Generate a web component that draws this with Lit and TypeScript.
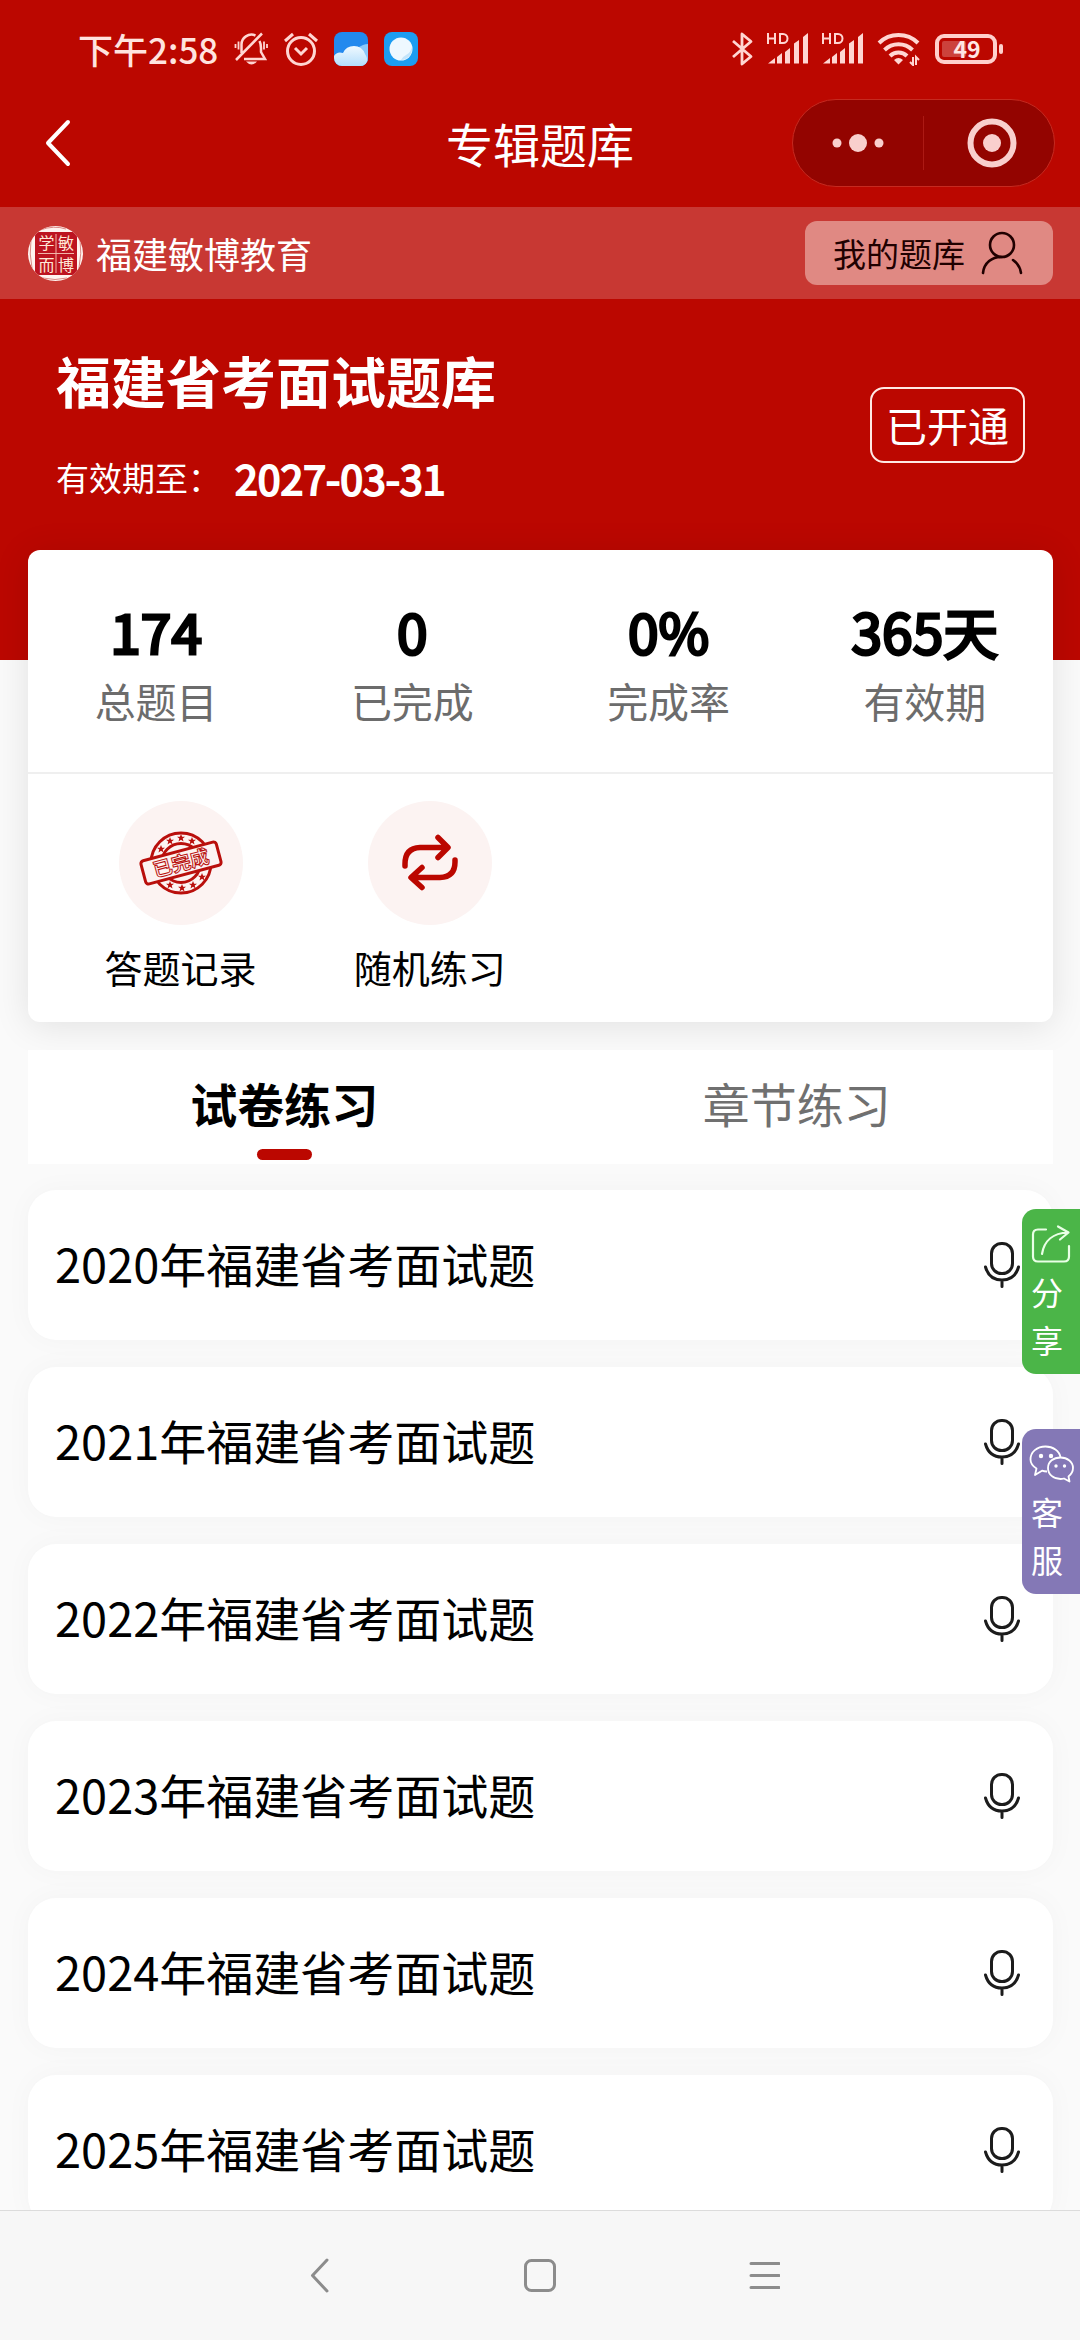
import { LitElement, html, svg, css } from "lit";
import { customElement, state } from "lit/decorators.js";
import { classMap } from "lit/directives/class-map.js";

const stats = [
  { value: "174", label: "总题目" },
  { value: "0", label: "已完成" },
  { value: "0%", label: "完成率" },
  { value: "365天", label: "有效期" },
];

const years = [2020, 2021, 2022, 2023, 2024, 2025];

const signal = () => html`<svg class="icon" width="42" height="34" viewBox="0 0 42 34" aria-hidden="true">
  <g fill="#ffd6d2">
    <path d="M1 31.5 8 26V31.5H1zM10 25l5-4v10.5h-5zM18 20l5-4v15.5h-5zM27 11.5l5-3.5v23.5h-5zM36 5l5-4v30.5h-5z" />
  </g>
  <path d="M1 1v11M1 6.5h7M8 1v11M13 2v9h3a4.5 4.5 0 0 0 0-9h-3z" fill="none" stroke="#ffd6d2" stroke-width="2" />
</svg>`;

const starAt = (x: number, y: number) => svg`<path transform="translate(${x} ${y})"
  d="M0-4 1.1-1.3 4-1.2 1.7.6 2.5 3.4 0 1.8-2.5 3.4-1.7.6-4-1.2-1.1-1.3z" fill="#b90f0c" />`;

@customElement("app-root")
export class AppRoot extends LitElement {
  @state() private tab = 0;

  static styles = css`
    :host {
      display: block;
      font-family: "Noto Sans CJK SC", "Noto Sans", sans-serif;
      color: #000;
    }
    .page {
      position: relative;
      display: flex;
      flex-direction: column;
      height: 100vh;
      overflow: hidden;
      background: #fafafa;
    }
    button {
      font: inherit;
      color: inherit;
      background: none;
      border: 0;
      padding: 0;
      margin: 0;
      cursor: pointer;
    }
    .icon {
      display: block;
      flex: none;
    }
    .content {
      flex: 1;
      min-height: 0;
      overflow: hidden;
    }
    .top {
      background: #bb0700;
      color: #fff;
      padding-bottom: 110px;
    }
    .status {
      display: flex;
      align-items: center;
      justify-content: space-between;
      height: 98px;
      padding: 0 76px 0 78px;
      color: #ffe3df;
    }
    .status-side {
      display: flex;
      align-items: center;
      gap: 16px;
    }
    .status-side.right {
      gap: 13px;
    }
    .clock {
      font-size: 35px;
      line-height: 48px;
      font-weight: 500;
    }
    .battery {
      font-family: "Noto Sans CJK SC", sans-serif;
      font-size: 23px;
      font-weight: 700;
    }
    .navbar {
      display: grid;
      grid-template-columns: 1fr auto 1fr;
      align-items: center;
      height: 90px;
      margin-bottom: 19px;
      padding: 0 25px;
    }
    .back {
      justify-self: start;
      padding: 0 16px;
    }
    .heading {
      margin: 0;
      font-size: 47px;
      line-height: 60px;
      font-weight: 400;
    }
    .capsule {
      justify-self: end;
      display: flex;
      align-items: center;
      height: 86px;
      border: 1px solid #c62a20;
      border-radius: 44px;
      background: #930400;
    }
    .capsule button {
      display: grid;
      place-items: center;
      width: 130px;
      height: 86px;
    }
    .capsule .close {
      padding-left: 6px;
    }
    .rule {
      width: 1px;
      height: 54px;
      background: #ac1a14;
    }
    .band {
      display: flex;
      align-items: center;
      justify-content: space-between;
      padding: 14px 27px 14px 28px;
      background: rgba(255, 255, 255, 0.2);
    }
    .brand {
      display: flex;
      align-items: center;
      gap: 13px;
      font-size: 36px;
      line-height: 48px;
    }
    .seal-text {
      font-size: 16px;
    }
    .mine {
      display: flex;
      align-items: center;
      gap: 16px;
      height: 64px;
      padding: 0 30px 0 28px;
      border-radius: 12px;
      background: #e08983;
      color: #200000;
      font-size: 33px;
      line-height: 48px;
    }
    .hero {
      display: flex;
      align-items: center;
      justify-content: space-between;
      padding: 50px 55px 43px 56px;
    }
    .hero-title {
      margin: 0 0 38px;
      font-size: 55px;
      line-height: 60px;
      font-weight: 700;
    }
    .expiry {
      display: flex;
      align-items: center;
      gap: 14px;
      font-size: 33px;
      line-height: 60px;
      margin: 0;
    }
    .expiry strong {
      font-size: 41px;
      font-weight: 400;
      -webkit-text-stroke: 2px currentColor;
    }
    .opened {
      margin-bottom: 6px;
      padding: 5px 14px 7px;
      border: 2px solid #ffe9e4;
      border-radius: 14px;
      font-size: 41px;
      line-height: 60px;
    }
    .card {
      margin: -110px 27px 0 28px;
      border-radius: 12px;
      background: #fff;
      box-shadow: 0 4px 36px rgba(0, 0, 0, 0.1);
      position: relative;
    }
    .stats {
      display: grid;
      grid-template-columns: repeat(4, 1fr);
      margin: 0;
      padding: 40px 0 42px;
      border-bottom: 2px solid #efefef;
      text-align: center;
    }
    .stat {
      display: flex;
      flex-direction: column-reverse;
    }
    .stat dt {
      font-size: 41px;
      line-height: 60px;
      color: #6c6c6c;
    }
    .stat dd {
      margin: 0;
      font-size: 55px;
      line-height: 80px;
      font-weight: 400;
      -webkit-text-stroke: 3px currentColor;
    }
    .actions {
      display: grid;
      grid-template-columns: repeat(4, 1fr);
      padding: 27px 0 25px 28px;
    }
    .action {
      display: flex;
      flex-direction: column;
      align-items: center;
      gap: 12px;
      font-size: 38px;
      line-height: 60px;
    }
    .disc {
      display: grid;
      place-items: center;
      width: 124px;
      height: 124px;
      border-radius: 50%;
      background: #fcf3f2;
    }
    .stamp-text {
      font-size: 19px;
      font-weight: 700;
    }
    .tabs {
      display: grid;
      grid-template-columns: 1fr 1fr;
      margin: 28px 27px 26px 28px;
      background: #fff;
      position: relative;
    }
    .tab {
      display: flex;
      flex-direction: column;
      align-items: center;
      padding: 23px 0 4px;
      gap: 16px;
      font-size: 47px;
      line-height: 60px;
      color: #707070;
    }
    .tab.active {
      color: #000;
      font-weight: 700;
    }
    .tab::after {
      content: "";
      width: 55px;
      height: 11px;
      border-radius: 6px;
    }
    .tab.active::after {
      background: #bb0700;
    }
    .papers {
      display: flex;
      flex-direction: column;
      gap: 27px;
      list-style: none;
      margin: 0 27px 0 28px;
      padding: 0;
    }
    .paper {
      display: flex;
      align-items: center;
      justify-content: space-between;
      width: 100%;
      height: 150px;
      padding: 0 33px 0 27px;
      border-radius: 28px;
      background: #fff;
      box-shadow: 0 0 28px rgba(0, 0, 0, 0.03);
      font-size: 47px;
      line-height: 60px;
      text-align: left;
    }
    .paper span {
      padding-bottom: 4px;
    }
    .floats {
      position: absolute;
      right: 0;
      top: 1209px;
      display: flex;
      flex-direction: column;
      gap: 55px;
    }
    .float {
      display: flex;
      flex-direction: column;
      gap: 3px;
      width: 58px;
      height: 165px;
      padding: 15px 0 0 7px;
      border-radius: 14px 0 0 14px;
      background: #4bb548;
      color: #fff;
      font-size: 32px;
      line-height: 48px;
      text-align: left;
    }
    .float.service {
      background: #8478b6;
    }
    .float span {
      display: block;
      width: 36px;
      text-align: center;
      word-break: break-all;
    }
    .sysbar {
      display: flex;
      align-items: center;
      justify-content: center;
      gap: 100px;
      height: 129px;
      border-top: 1px solid #dcdcdc;
      background: #f7f7f7;
    }
    .sysbar button {
      display: grid;
      place-items: center;
      width: 120px;
      height: 96px;
    }
  `;

  private renderStatus() {
    return html`<div class="status">
      <div class="status-side">
        <span class="clock">下午2:58</span>
        <svg class="icon" width="34" height="34" viewBox="0 0 34 34" fill="none" stroke="#ffd6d2" stroke-width="2.5" aria-hidden="true">
          <path d="M7.5 21V13a10 10 0 0 1 14-9.5M25.500 9c1 2 1.500 4 1.500 7v4l4 7H10M2 28 28 1.500" />
          <path d="M1.500 12v4M4.500 9.500v8M30 9.500v8M33 12v4" stroke-width="1.800" />
          <path d="M12 29.500h11q-5.500 6-11 0z" fill="#ffd6d2" stroke="none" />
        </svg>
        <svg class="icon" width="34" height="34" viewBox="0 0 34 34" fill="none" stroke="#ffd6d2" stroke-width="3" aria-hidden="true">
          <circle cx="17" cy="19" r="13.5" />
          <path d="M1 9 9 2M25 2l8 7M11 16l6 6 6-6" />
        </svg>
        <svg class="icon" width="34" height="34" viewBox="0 0 34 34" aria-hidden="true">
          <defs>
            <clipPath id="weather-clip"><rect width="34" height="34" rx="8" /></clipPath>
            <linearGradient id="cloud" x1="0" y1="0" x2="0" y2="1">
              <stop offset="0" stop-color="#f0f9ff" /><stop offset="1" stop-color="#b4defc" />
            </linearGradient>
          </defs>
          <g clip-path="url(#weather-clip)">
            <rect width="34" height="34" fill="#2389ee" />
            <path d="M24 16q5-4 10-4v22H20z" fill="#8cc8fa" />
            <path d="M0 34V24q3-5 9-3 3-7 11-7 8 0 11 8 3 4 3 12z" fill="url(#cloud)" />
          </g>
        </svg>
        <svg class="icon" width="34" height="34" viewBox="0 0 34 34" aria-hidden="true">
          <rect width="34" height="34" rx="8" fill="#1c9df2" />
          <circle cx="17" cy="17" r="11.5" fill="#eef8ff" />
          <path d="M28 15a11.5 11.5 0 0 1-11 13q1-3 5-5 5-3 6-8z" fill="#c4e4fa" />
        </svg>
      </div>
      <div class="status-side right">
        <svg class="icon" width="22" height="34" viewBox="0 0 22 34" aria-hidden="true">
          <path d="M1 9l18 15.5-9 7.5V2l9 7.5L1 25" fill="none" stroke="#ffd6d2" stroke-width="2.8" stroke-linejoin="round" />
        </svg>
        ${signal()} ${signal()}
        <svg class="icon" width="44" height="34" viewBox="0 0 44 34" fill="none" stroke="#ffd6d2" aria-hidden="true">
          <path d="M2 11a28 28 0 0 1 39 0M7.5 18a20 20 0 0 1 28 0M13 24a12 12 0 0 1 17 0" stroke-width="4" />
          <path d="M17 28q4.5-4 9 0l-4.5 4.5z" fill="#ffd6d2" stroke="none" />
          <path d="M36 25v8l-3-3M39 33v-8l3 3" stroke-width="2" />
        </svg>
        <svg class="icon" width="70" height="34" viewBox="0 0 70 34" role="img" aria-label="49%">
          <rect x="3" y="4" width="58" height="26" rx="7" fill="none" stroke="#ffd0cc" stroke-width="4" />
          <rect x="8" y="9" width="24" height="16" rx="2" fill="#cc423c" />
          <rect x="65" y="12" width="4" height="10" rx="2" fill="#ffd0cc" />
          <text class="battery" x="33" y="26" text-anchor="middle" fill="#ffe6e3">49</text>
        </svg>
      </div>
    </div>`;
  }

  private renderHeader() {
    return html`<nav class="navbar">
        <button class="back" aria-label="返回">
          <svg class="icon" width="32" height="50" viewBox="0 0 32 50">
            <path d="M27 4 7 25l20 21" fill="none" stroke="#fff" stroke-width="4" stroke-linecap="round" stroke-linejoin="round" />
          </svg>
        </button>
        <h1 class="heading">专辑题库</h1>
        <div class="capsule">
          <button aria-label="更多">
            <svg class="icon" width="54" height="20" viewBox="0 0 54 20" fill="#f9cfcd">
              <circle cx="6" cy="10" r="4.5" /><circle cx="27" cy="10" r="9" /><circle cx="48" cy="10" r="4.5" />
            </svg>
          </button>
          <span class="rule"></span>
          <button class="close" aria-label="关闭">
            <svg class="icon" width="50" height="50" viewBox="0 0 50 50">
              <circle cx="25" cy="25" r="21.5" fill="none" stroke="#f9cfcd" stroke-width="6" />
              <circle cx="25" cy="25" r="9" fill="#f9cfcd" />
            </svg>
          </button>
        </div>
      </nav>
      <div class="band">
        <div class="brand">
          <svg class="icon" width="55" height="55" viewBox="0 0 55 55" aria-hidden="true">
            <defs><clipPath id="seal-clip"><circle cx="27.5" cy="27.5" r="27.5" /></clipPath></defs>
            <g clip-path="url(#seal-clip)">
              <rect width="55" height="55" fill="#fff3ef" />
              <rect x="7" y="6" width="42" height="43" rx="4" fill="#bd1420" />
              <path d="M12 4q14-5 26-1M3 14q-2 14 1 28M52 13q2 14-1 29M15 52q12 3 24 0" fill="none" stroke="#d98a86" stroke-width="1" />
              <path d="M28 8v39M10 27.5h36" stroke="#f2b5a8" stroke-width="1" />
              <g class="seal-text" fill="#ffe9d8" text-anchor="middle">
                <text x="18.5" y="23">学</text><text x="38" y="23">敏</text>
                <text x="18.5" y="45">而</text><text x="38" y="45">博</text>
              </g>
            </g>
          </svg>
          <span>福建敏博教育</span>
        </div>
        <button class="mine">
          <span>我的题库</span>
          <svg class="icon" width="42" height="44" viewBox="0 0 42 44" fill="none" stroke="#200000" stroke-width="2.6" stroke-linecap="round" aria-hidden="true">
            <circle cx="21" cy="14" r="12" />
            <path d="M2 42C3 32 11 25.5 21 26M32 29q7 5 8 13" />
          </svg>
        </button>
      </div>
      <section class="hero">
        <div>
          <h2 class="hero-title">福建省考面试题库</h2>
          <p class="expiry"><span>有效期至：</span><strong>2027-03-31</strong></p>
        </div>
        <span class="opened">已开通</span>
      </section>`;
  }

  private renderCard() {
    return html`<section class="card">
      <dl class="stats">
        ${stats.map((s) => html`<div class="stat"><dt>${s.label}</dt><dd>${s.value}</dd></div>`)}
      </dl>
      <div class="actions">
        <button class="action">
          <span class="disc">
            <svg class="icon" width="86" height="66" viewBox="-43 -33 86 66" aria-hidden="true">
              <circle r="30" fill="none" stroke="#b90f0c" stroke-width="3" />
              <circle r="19.5" fill="none" stroke="#b90f0c" stroke-width="3" />
              ${starAt(-20, -14)}${starAt(-11, -22)}${starAt(0, -25)}${starAt(11, -22)}
              ${starAt(-11, 22)}${starAt(1, 25)}${starAt(12, 22)}${starAt(21, 14)}
              <g transform="rotate(-15)">
                <rect x="-39" y="-12" width="78" height="24" rx="3" fill="#fcf3f2" stroke="#b90f0c" stroke-width="3" />
                <text class="stamp-text" y="7" text-anchor="middle" fill="#fcf3f2" stroke="#b90f0c" stroke-width="1">已完成</text>
              </g>
            </svg>
          </span>
          <span>答题记录</span>
        </button>
        <button class="action">
          <span class="disc">
            <svg class="icon" width="60" height="60" viewBox="-30 -30 60 60" fill="none" stroke="#bb0700" stroke-width="5.5" stroke-linecap="round" stroke-linejoin="round" aria-hidden="true">
              <path d="M-25 3v-2q0-16 15-16.5H17M8-25.5 18-15.5 8-5.5M25-3v2q0 15-15 15.5H-18M-8 4.5-19 14.5-8 24.5" />
            </svg>
          </span>
          <span>随机练习</span>
        </button>
      </div>
    </section>`;
  }

  private renderPapers() {
    return html`<div class="tabs" role="tablist">
        ${["试卷练习", "章节练习"].map(
          (name, i) => html`<button
            role="tab"
            aria-selected=${this.tab === i ? "true" : "false"}
            class=${classMap({ tab: true, active: this.tab === i })}
            @click=${() => (this.tab = i)}
          >${name}</button>`
        )}
      </div>
      <ul class="papers">
        ${years.map(
          (y) => html`<li>
            <button class="paper">
              <span>${y}年福建省考面试题</span>
              <svg class="icon" width="36" height="46" viewBox="0 0 36 46" fill="none" stroke="#1c1c1c" stroke-linecap="round" aria-hidden="true">
                <rect x="7.5" y="1.5" width="21" height="30" rx="10" stroke-width="3" />
                <path d="M1.5 25C4 34 10 38 18 38s14-4 16.5-13M18 38v6.500" stroke-width="3" />
              </svg>
            </button>
          </li>`
        )}
      </ul>`;
  }

  render() {
    return html`<div class="page">
      <main class="content">
        <header class="top">${this.renderStatus()}${this.renderHeader()}</header>
        ${this.renderCard()}${this.renderPapers()}
      </main>
      <aside class="floats">
        <button class="float">
          <svg class="icon" width="44" height="40" viewBox="0 0 44 40" fill="none" stroke="#e9ffe6" stroke-width="2.2" stroke-linecap="round" stroke-linejoin="round" aria-hidden="true">
            <path d="M17 5.5H9q-5 0-5 5v22q0 5 5 5h26q5 0 5-5V22M13 30C15 17 24 9 39 8.5M29 2.5l10.5 6-8.5 7" />
          </svg>
          <span>分享</span>
        </button>
        <button class="float service">
          <svg class="icon" width="46" height="40" viewBox="0 0 46 40" fill="none" stroke="#fff" stroke-width="1.8" stroke-linejoin="round" aria-hidden="true">
            <path d="M18 27.5q-3 0-5-.8L6 31l1.5-6.5C3.500 22 1.500 19 1.500 15.500 1.500 8 8 2.500 16.500 2.500c7.500 0 14 4.500 15 11" />
            <path d="M31.500 13.500c7 0 12.500 4.500 12.500 10.500 0 3.500-2 6.500-4.500 8.500l1 5-5.500-3q-2 .5-3.500.5c-7 0-12.500-4.500-12.500-11s5.500-10.500 12.500-10.500z" />
            <g fill="#fff" stroke="none"><circle cx="12" cy="12" r="2.2" /><circle cx="22" cy="12" r="2.2" /><circle cx="27" cy="22" r="1.7" /><circle cx="35.5" cy="22" r="1.7" /></g>
          </svg>
          <span>客服</span>
        </button>
      </aside>
      <footer class="sysbar">
        <button aria-label="返回">
          <svg class="icon" width="40" height="36" viewBox="0 0 40 36"><path d="M27 2 12.500 17.500 27 33" fill="none" stroke="#8c8c8c" stroke-width="3" stroke-linecap="round" stroke-linejoin="round" /></svg>
        </button>
        <button aria-label="主屏幕">
          <svg class="icon" width="40" height="36" viewBox="0 0 40 36"><rect x="5.500" y="2.500" width="29" height="30" rx="6" fill="none" stroke="#8c8c8c" stroke-width="3" /></svg>
        </button>
        <button aria-label="最近任务">
          <svg class="icon" width="40" height="36" viewBox="0 0 40 36"><path d="M11 5.500h28M11 17.500h28M11 29.500h28" stroke="#8c8c8c" stroke-width="3" stroke-linecap="round" /></svg>
        </button>
      </footer>
    </div>`;
  }
}
